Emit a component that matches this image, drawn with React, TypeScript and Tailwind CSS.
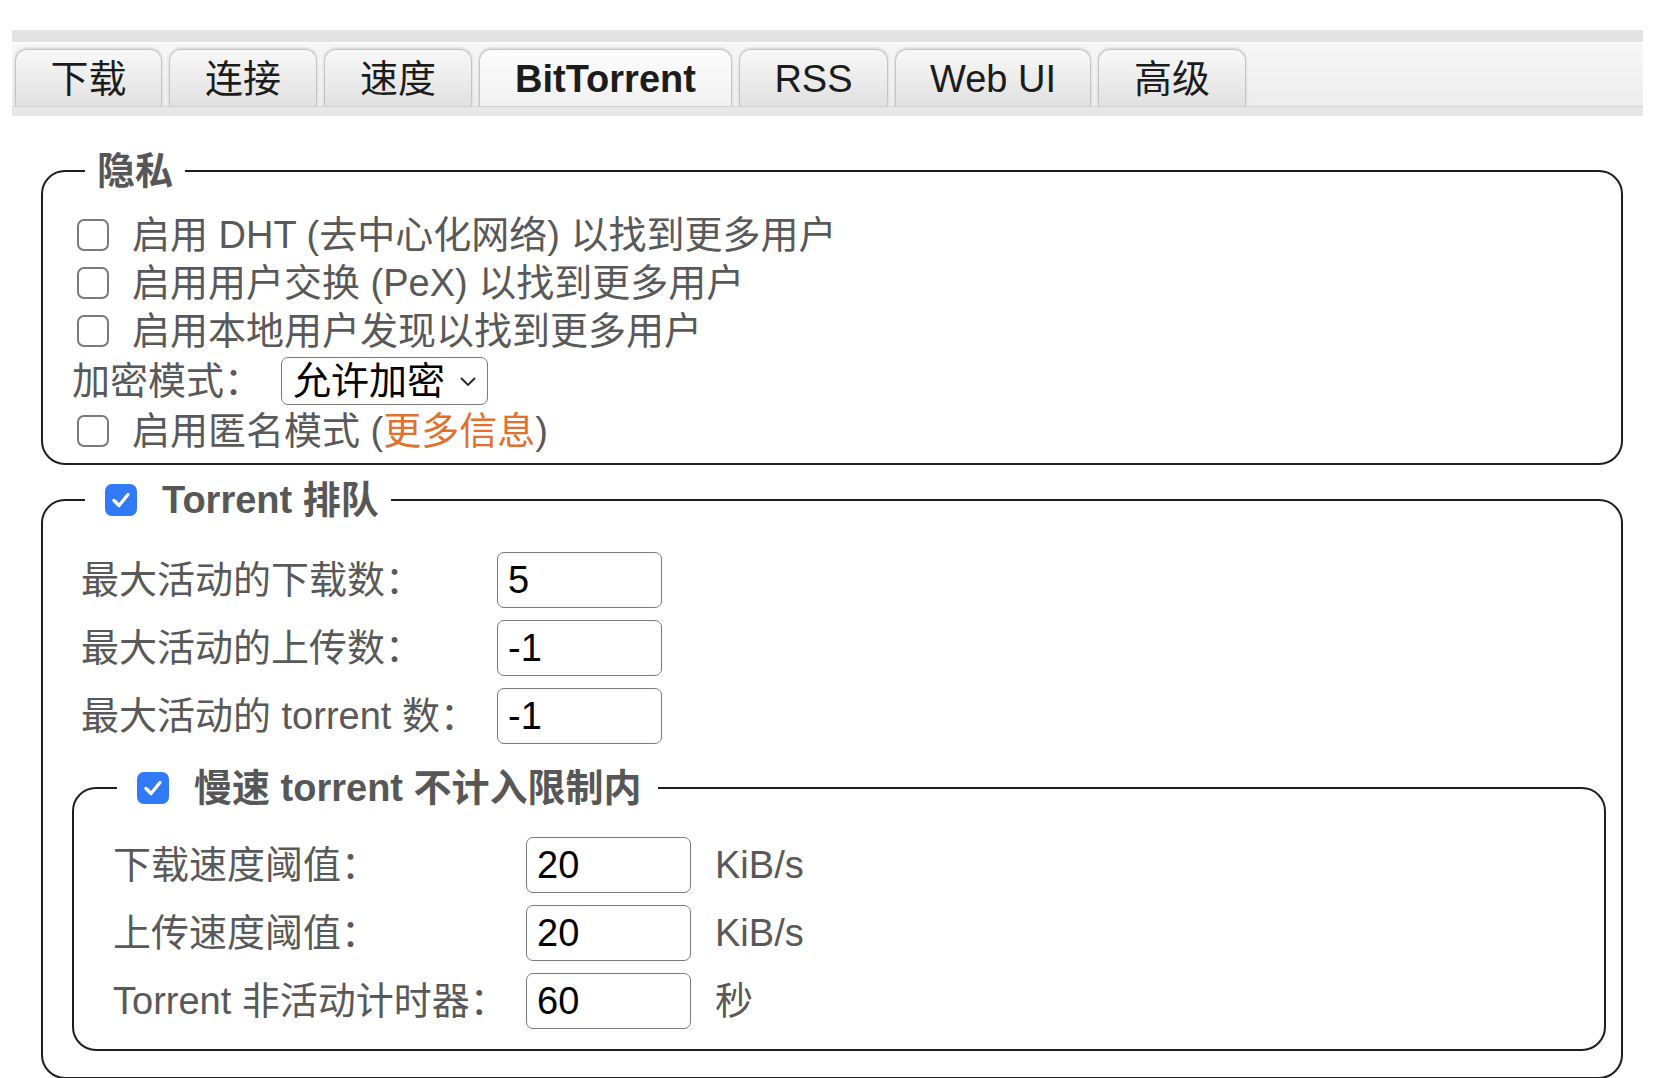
import React from "react";

// 页面里的标签页，宽度按截图量出来的。
const tabs = [
  { label: "下载", w: "w-[147px]" },
  { label: "连接", w: "w-[148px]" },
  { label: "速度", w: "w-[148px]" },
  { label: "BitTorrent", w: "w-[253px]", active: true },
  { label: "RSS", w: "w-[149px]" },
  { label: "Web UI", w: "w-[196px]" },
  { label: "高级", w: "w-[148px]" },
];

function Checkbox({ checked = false }: { checked?: boolean }) {
  if (checked) {
    return (
      <div className="flex h-[32px] w-[32px] shrink-0 items-center justify-center rounded-[7px] bg-[#3279f5]">
        <svg width="20" height="18" viewBox="0 0 20 18" fill="none">
          <path
            d="M3 9.5 L8 14.5 L17 3.5"
            stroke="white"
            strokeWidth="3.4"
            strokeLinecap="round"
            strokeLinejoin="round"
          />
        </svg>
      </div>
    );
  }
  return (
    <div className="h-[32px] w-[32px] shrink-0 rounded-[7px] border-2 border-[#7a7a7a] bg-white" />
  );
}

function TextBox({ value }: { value: string }) {
  return (
    <div className="flex h-[56px] w-[165px] items-center rounded-[7px] border-[1.5px] border-[#7a7a7a] bg-white px-[10px] text-black">
      {value}
    </div>
  );
}

function CheckRow({ children }: { children: React.ReactNode }) {
  return (
    <div className="flex h-[48px] items-center gap-[23px]">
      <Checkbox />
      <span>{children}</span>
    </div>
  );
}

export default function App() {
  return (
    <div className="h-screen overflow-hidden bg-white pt-[30px] font-['Liberation_Sans','Noto_Sans_CJK_SC',sans-serif] text-[38px] text-[#595959]">
      {/* 顶部标签栏 */}
      <div className="ml-[12px] w-[1631px]">
        <div className="h-[13px] border-b border-white bg-[#e3e3e3]" />
        <div className="flex h-[63px] items-end gap-[7px] bg-gradient-to-b from-[#f7f7f7] to-[#ededed] pl-[3px]">
          {tabs.map((t) => (
            <div
              key={t.label}
              className={
                t.active
                  ? `${t.w} flex h-[57px] items-center justify-center rounded-t-[12px] border border-b-0 border-[#c4c4c4] bg-gradient-to-b from-[#fdfdfd] to-[#f1f1f1] pt-[3px] font-bold text-[#1c1c1c] shadow-[0_-1px_3px_rgba(0,0,0,0.15)]`
                  : `${t.w} flex h-[57px] items-center justify-center rounded-t-[12px] border border-b-0 border-[#c4c4c4] bg-gradient-to-b from-[#f8f8f8] to-[#e1e1e1] pt-[3px] text-[#1c1c1c] shadow-[0_-1px_3px_rgba(0,0,0,0.15)]`
              }
            >
              {t.label}
            </div>
          ))}
        </div>
        <div className="h-[10px] border-t border-[#d4d4d4] bg-[#e7e7e7]" />
      </div>

      {/* 隐私 */}
      <fieldset className="mt-[32px] ml-[41px] w-[1582px] rounded-[24px] border-2 border-[#1e1e1e] p-0">
        <legend className="ml-[42px] px-[12px] font-bold leading-[46px] text-[#575757]">
          隐私
        </legend>
        <div className="pt-[17px] pb-[8px] pl-[34px] leading-[48px]">
          <CheckRow>启用 DHT (去中心化网络) 以找到更多用户</CheckRow>
          <CheckRow>启用用户交换 (PeX) 以找到更多用户</CheckRow>
          <CheckRow>启用本地用户发现以找到更多用户</CheckRow>
          <div className="-ml-[5px] flex h-[52px] items-center">
            <span>加密模式：</span>
            <div className="ml-[19px] flex h-[48px] items-center gap-[14px] rounded-[7px] border-[1.5px] border-[#7a7a7a] pr-[10px] pl-[11px] text-black">
              允许加密
              <svg width="18" height="11" viewBox="0 0 18 11" fill="none">
                <path d="M2 2 L9 9 L16 2" stroke="#222" strokeWidth="1.8" />
              </svg>
            </div>
          </div>
          <CheckRow>
            启用匿名模式 (<span className="text-[#e2702f]">更多信息</span>)
          </CheckRow>
        </div>
      </fieldset>

      {/* Torrent 排队 */}
      <fieldset className="mt-[12px] ml-[41px] w-[1582px] rounded-[24px] border-2 border-[#1e1e1e] p-0">
        <legend className="ml-[42px] pr-[12px] pl-[20px] leading-[46px]">
          <div className="flex items-center gap-[25px] font-bold text-[#575757]">
            <Checkbox checked />
            <span>Torrent 排队</span>
          </div>
        </legend>
        <div className="pt-[23px] pr-[15px] pb-[26px] pl-[29px]">
          <div className="grid grid-cols-[416px_165px] auto-rows-[68px] items-center pl-[9px]">
            <span>最大活动的下载数：</span>
            <TextBox value="5" />
            <span>最大活动的上传数：</span>
            <TextBox value="-1" />
            <span>最大活动的 torrent 数：</span>
            <TextBox value="-1" />
          </div>

          {/* 慢速 torrent */}
          <fieldset className="mt-[15px] w-full rounded-[24px] border-2 border-[#1e1e1e] p-0">
            <legend className="ml-[43px] pr-[16px] pl-[20px] leading-[46px]">
              <div className="flex items-center gap-[25px] font-bold text-[#575757]">
                <Checkbox checked />
                <span>慢速 torrent 不计入限制内</span>
              </div>
            </legend>
            <div className="grid grid-cols-[413px_165px_auto] auto-rows-[68px] items-center pt-[20px] pb-[14px] pl-[39px]">
              <span>下载速度阈值：</span>
              <TextBox value="20" />
              <span className="pl-[24px]">KiB/s</span>
              <span>上传速度阈值：</span>
              <TextBox value="20" />
              <span className="pl-[24px]">KiB/s</span>
              <span>Torrent 非活动计时器：</span>
              <TextBox value="60" />
              <span className="pl-[24px]">秒</span>
            </div>
          </fieldset>
        </div>
      </fieldset>
    </div>
  );
}
